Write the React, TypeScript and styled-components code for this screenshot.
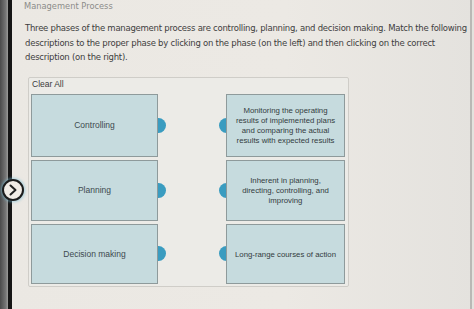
import styled, { createGlobalStyle } from "styled-components";

const GlobalStyle = createGlobalStyle`
  html, body {
    margin: 0;
    padding: 0;
    width: 474px;
    height: 309px;
    overflow: hidden;
    background: #e8e5df;
  }
`;

const questionLines = [
  "Three phases of the management process are controlling, planning, and decision making. Match the following",
  "descriptions to the proper phase by clicking on the phase (on the left) and then clicking on the correct",
  "description (on the right).",
];

const pairs = [
  {
    phase: "Controlling",
    description:
      "Monitoring the operating results of implemented plans and comparing the actual results with expected results",
  },
  {
    phase: "Planning",
    description: "Inherent in planning, directing, controlling, and improving",
  },
  {
    phase: "Decision making",
    description: "Long-range courses of action",
  },
];

export default function App() {
  return (
    <>
      <GlobalStyle />
      <Page>
        <Rail>
          <RailLine />
          <NavButton aria-label="next">
            <svg width="12" height="14" viewBox="0 0 12 14">
              <path
                d="M3.5 2.5 L8.5 7 L3.5 11.5"
                fill="none"
                stroke="#222"
                strokeWidth="2"
                strokeLinecap="round"
                strokeLinejoin="round"
              />
            </svg>
          </NavButton>
        </Rail>
        <Content>
          <Title>Management Process</Title>
          <Question>
            {questionLines.map((line) => (
              <QuestionLine key={line}>{line}</QuestionLine>
            ))}
          </Question>
          <MatchPanel>
            <ClearAll>Clear All</ClearAll>
            <MatchGrid>
              {pairs.map((p) => (
                <Row key={p.phase}>
                  <PhaseBox>{p.phase}</PhaseBox>
                  <Dot side="right" />
                  <Spacer />
                  <Dot side="left" />
                  <DescBox>{p.description}</DescBox>
                </Row>
              ))}
            </MatchGrid>
          </MatchPanel>
        </Content>
        <EdgeLine />
      </Page>
    </>
  );
}

const Page = styled.div`
  display: flex;
  width: 474px;
  height: 309px;
  background: linear-gradient(90deg, #ebe8e3 0%, #ece9e4 60%, #e4e2de 100%);
`;

const Rail = styled.div`
  position: relative;
  width: 13px;
  flex-shrink: 0;
  display: flex;
  background: linear-gradient(90deg, #4a4a4a 0%, #777 45%, #9a9a98 60%, transparent 62%);
`;

const RailLine = styled.div`
  margin-left: 8px;
  width: 4px;
  height: 100%;
  background: #151515;
`;

const NavButton = styled.div`
  position: absolute;
  left: 2px;
  top: 179px;
  width: 22px;
  height: 22px;
  border-radius: 50%;
  border: 2px solid #1c1c1c;
  background: #f1ece6;
  box-shadow: 0 0 3px 1px rgba(120, 190, 215, 0.6);
  box-sizing: border-box;
  display: flex;
  align-items: center;
  justify-content: center;
  z-index: 2;
`;

const Content = styled.div`
  flex: 1;
  padding: 0 0 0 11px;
  font-family: "DejaVu Sans", Verdana, sans-serif;
`;

const Title = styled.div`
  font-size: 8.3px;
  color: #8c8c8a;
  line-height: 13px;
`;

const Question = styled.div`
  margin: 8px 0 0 1px;
  font-size: 8.5px;
  line-height: 14.5px;
  color: #3e3e3e;
  letter-spacing: -0.25px;
`;

const QuestionLine = styled.div`
  white-space: nowrap;
`;

const MatchPanel = styled.div`
  margin: 12px 0 0 4px;
  width: 321px;
  height: 210px;
  box-sizing: border-box;
  border: 1px solid #cfcdc8;
  border-radius: 2px;
  background: #ecebe7;
  padding: 0 3px 0 2px;
`;

const ClearAll = styled.div`
  font-family: "Liberation Sans", Arial, sans-serif;
  font-size: 8.5px;
  color: #3a3a3a;
  height: 16px;
  line-height: 10px;
  padding: 1px 0 0 1px;
  box-sizing: border-box;
`;

const MatchGrid = styled.div`
  display: grid;
  grid-template-rows: 63px 61px 60px;
  row-gap: 3px;
`;

const Row = styled.div`
  display: flex;
  align-items: center;
`;

const boxBase = `
  box-sizing: border-box;
  height: 100%;
  display: flex;
  align-items: center;
  justify-content: center;
  text-align: center;
  background: #c6dbde;
  border: 1px solid #8e9a9b;
  font-family: "Liberation Sans", Arial, sans-serif;
  color: #3d4a4e;
`;

const PhaseBox = styled.div`
  ${boxBase}
  width: 127px;
  font-size: 8.5px;
`;

const DescBox = styled.div`
  ${boxBase}
  width: 119px;
  margin-left: -1px;
  padding: 2px 8px 0;
  font-size: 7.8px;
  line-height: 10px;
  color: #333c40;
`;

const Spacer = styled.div`
  width: 53px;
`;

const Dot = styled.div<{ side: "left" | "right" }>`
  width: 8px;
  height: 15px;
  background: #3a9cc0;
  border-radius: ${(p) => (p.side === "right" ? "0 8px 8px 0" : "8px 0 0 8px")};
  flex-shrink: 0;
`;

const EdgeLine = styled.div`
  width: 2px;
  margin-right: 2px;
  height: 100%;
  background: #b9b8b5;
  flex-shrink: 0;
`;
